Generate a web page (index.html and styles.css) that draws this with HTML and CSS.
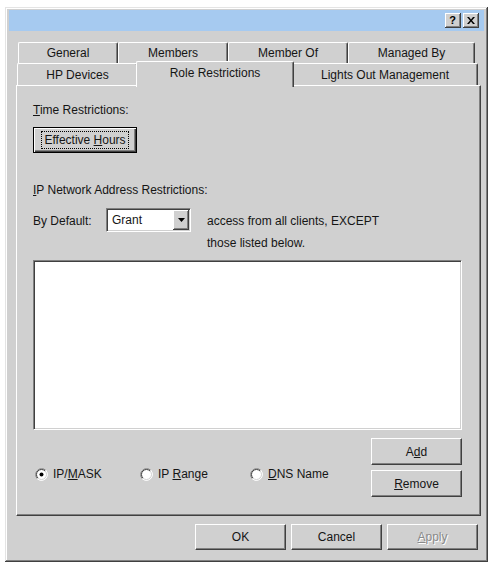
FILE: index.html
```html
<!DOCTYPE html>
<html>
<head>
<meta charset="utf-8">
<link rel="stylesheet" href="styles.css">
</head>
<body>
<div class="window">
  <div class="titlebar">
    <span class="capbtn q">?</span>
    <span class="capbtn"><svg width="8" height="7" viewBox="0 0 8 7"><path d="M0 0h2l2 2.5L6 0h2L5 3.5 8 7H6L4 4.5 2 7H0l3-3.5z" fill="#000"/></svg></span>
  </div>
  <div class="tabs">
    <div class="tabrow back">
      <div class="tab t-general">General</div>
      <div class="tab t-members">Members</div>
      <div class="tab t-memberof">Member Of</div>
      <div class="tab t-managed">Managed By</div>
    </div>
    <div class="tabrow front">
      <div class="tab t-hp">HP Devices</div>
      <div class="tab t-role sel">Role Restrictions</div>
      <div class="tab t-lights">Lights Out Management</div>
    </div>
  </div>
  <div class="panel">
    <div class="lbl"><u>T</u>ime Restrictions:</div>
    <button class="btn default hours"><span class="focus">Effective <u>H</u>ours</span></button>
    <div class="lbl ipnet"><u>I</u>P Network Address Restrictions:</div>
    <div class="defrow">
      <span class="bydef">By Default:</span>
      <div class="combo">
        <span class="combo-text">Grant</span>
        <span class="combo-btn"><svg width="7" height="4" viewBox="0 0 7 4"><path d="M0 0h7L3.5 4z" fill="#000"/></svg></span>
      </div>
      <div class="access">access from all clients, EXCEPT<br>those listed below.</div>
    </div>
    <div class="listbox"></div>
    <div class="bottomrow">
      <div class="radios">
        <label class="radio r1">
          <svg width="13" height="13" viewBox="0 0 13 13"><circle cx="6.5" cy="6.5" r="6" fill="#fff"/><path d="M2.26 10.74A6 6 0 0 1 10.74 2.26" fill="none" stroke="#808080"/><path d="M10.74 2.26A6 6 0 0 1 2.26 10.74" fill="none" stroke="#fff"/><path d="M2.96 10.04A5 5 0 0 1 10.04 2.96" fill="none" stroke="#404040"/><path d="M10.04 2.96A5 5 0 0 1 2.96 10.04" fill="none" stroke="#d0d0d0"/><circle cx="6.5" cy="6.5" r="2" fill="#000"/></svg>
          <span>IP/<u>M</u>ASK</span>
        </label>
        <label class="radio r2">
          <svg width="13" height="13" viewBox="0 0 13 13"><circle cx="6.5" cy="6.5" r="6" fill="#fff"/><path d="M2.26 10.74A6 6 0 0 1 10.74 2.26" fill="none" stroke="#808080"/><path d="M10.74 2.26A6 6 0 0 1 2.26 10.74" fill="none" stroke="#fff"/><path d="M2.96 10.04A5 5 0 0 1 10.04 2.96" fill="none" stroke="#404040"/><path d="M10.04 2.96A5 5 0 0 1 2.96 10.04" fill="none" stroke="#d0d0d0"/></svg>
          <span>IP <u>R</u>ange</span>
        </label>
        <label class="radio r3">
          <svg width="13" height="13" viewBox="0 0 13 13"><circle cx="6.5" cy="6.5" r="6" fill="#fff"/><path d="M2.26 10.74A6 6 0 0 1 10.74 2.26" fill="none" stroke="#808080"/><path d="M10.74 2.26A6 6 0 0 1 2.26 10.74" fill="none" stroke="#fff"/><path d="M2.96 10.04A5 5 0 0 1 10.04 2.96" fill="none" stroke="#404040"/><path d="M10.04 2.96A5 5 0 0 1 2.96 10.04" fill="none" stroke="#d0d0d0"/></svg>
          <span><u>D</u>NS Name</span>
        </label>
      </div>
      <div class="sidebtns">
        <button class="btn side">A<u>d</u>d</button>
        <button class="btn side"><u>R</u>emove</button>
      </div>
    </div>
  </div>
  <div class="dlgbtns">
    <button class="btn dlg">OK</button>
    <button class="btn dlg">Cancel</button>
    <button class="btn dlg disabled"><u>A</u>pply</button>
  </div>
</div>
</body>
</html>
```
FILE: styles.css
```css
body {
  margin: 0;
  background: #fff;
  font-family: "Liberation Sans", Arial, sans-serif;
  font-size: 12px;
  color: #151515;
}
u { text-underline-offset: 1px; }

.window {
  margin: 7px 0 0 5px;
  width: 483px;
  height: 555px;
  box-sizing: border-box;
  padding: 3px 4px;
  background: #d0d0d0;
  box-shadow: inset -1px -1px #404040, inset 1px 1px #e4e4e4, inset -2px -2px #808080, inset 2px 2px #fff;
}

.titlebar {
  height: 21px;
  background: #a6caf0;
  display: flex;
  justify-content: flex-end;
  align-items: center;
  gap: 2px;
  padding-right: 5px;
}
.capbtn {
  width: 16px;
  height: 15px;
  box-sizing: border-box;
  background: #d0d0d0;
  box-shadow: inset -1px -1px #404040, inset 1px 1px #fff, inset -2px -2px #808080;
  display: flex;
  align-items: center;
  justify-content: center;
  padding: 0 1px 1px 0;
}
.capbtn.q {
  font-weight: bold;
  font-size: 11px;
  line-height: 1;
  color: #000;
}

.tabs { margin-top: 11px; }
.tabrow { display: flex; }
.back { height: 21px; margin-left: 9px; }
.front { height: 22px; margin-left: 8px; align-items: flex-end; }
.tab {
  box-sizing: border-box;
  height: 100%;
  background: #d0d0d0;
  border-top: 1px solid #fff;
  border-left: 1px solid #fff;
  border-right: 1px solid #404040;
  box-shadow: inset -1px 0 #808080;
  border-radius: 2px 2px 0 0;
  display: flex;
  align-items: center;
  justify-content: center;
  white-space: nowrap;
}
.t-general { width: 100px; }
.t-members { width: 110px; }
.t-memberof { width: 120px; }
.t-managed { width: 127px; }
.t-hp { width: 121px; }
.t-role { width: 158px; }
.t-lights { width: 186px; }
.tab.sel {
  height: 26px;
  margin: 0 -2px -2px;
  padding-bottom: 4px;
  position: relative;
  z-index: 2;
}

.panel {
  margin-left: 7px;
  width: 465px;
  height: 431px;
  box-sizing: border-box;
  border-top: 1px solid #fff;
  border-left: 1px solid #fff;
  border-right: 1px solid #404040;
  border-bottom: 1px solid #404040;
  box-shadow: inset -1px -1px #808080;
  padding: 17px 18px 0 16px;
}

.lbl { line-height: 15px; }
.ipnet { margin-top: 30px; }

.btn {
  appearance: none;
  margin: 0;
  padding: 0;
  font: inherit;
  color: inherit;
  background: #d0d0d0;
  box-sizing: border-box;
  border: 1px solid;
  border-color: #fff #404040 #404040 #fff;
  box-shadow: inset -1px -1px #808080;
  display: flex;
  align-items: center;
  justify-content: center;
}
.btn.default {
  border: 1px solid #000;
  box-shadow: inset 1px 1px #fff, inset -1px -1px #404040, inset -2px -2px #808080;
}
.hours {
  margin-top: 9px;
  width: 104px;
  height: 26px;
}
.focus {
  border: 1px dotted #000;
  padding: 1px 2px;
  line-height: 14px;
}

.defrow {
  display: flex;
  align-items: flex-start;
  margin-top: 10px;
}
.bydef {
  width: 73px;
  line-height: 27px;
}
.combo {
  width: 85px;
  height: 24px;
  box-sizing: border-box;
  background: #fff;
  border: 1px solid;
  border-color: #808080 #fff #fff #808080;
  box-shadow: inset 1px 1px #404040, inset -1px -1px #d0d0d0;
  padding: 1px;
  display: flex;
  align-items: center;
  justify-content: space-between;
}
.combo-text { padding-left: 4px; }
.combo-btn {
  width: 16px;
  height: 20px;
  box-sizing: border-box;
  background: #d0d0d0;
  box-shadow: inset -1px -1px #404040, inset 1px 1px #fff, inset -2px -2px #808080;
  display: flex;
  align-items: center;
  justify-content: center;
}
.access {
  margin-left: 16px;
  margin-top: 2px;
  line-height: 22px;
}

.listbox {
  margin-top: 6px;
  height: 170px;
  box-sizing: border-box;
  background: #fff;
  border: 1px solid;
  border-color: #808080 #fff #fff #808080;
  box-shadow: inset 1px 1px #404040, inset -1px -1px #d0d0d0;
}

.bottomrow {
  display: flex;
  justify-content: space-between;
  align-items: flex-start;
  margin-top: 8px;
}
.radios {
  display: flex;
  margin-top: 29px;
  margin-left: 2px;
}
.radio {
  display: flex;
  align-items: center;
  gap: 5px;
  line-height: 15px;
}
.r1 { width: 105px; }
.r2 { width: 110px; }
.sidebtns {
  display: flex;
  flex-direction: column;
  gap: 5px;
}
.side { width: 91px; height: 27px; }

.dlgbtns {
  display: flex;
  justify-content: flex-end;
  gap: 5px;
  margin-top: 8px;
  padding-right: 6px;
}
.dlg { width: 91px; height: 26px; }
.disabled {
  color: #8a8a8a;
  text-shadow: 1px 1px 0 #fff;
}
```
